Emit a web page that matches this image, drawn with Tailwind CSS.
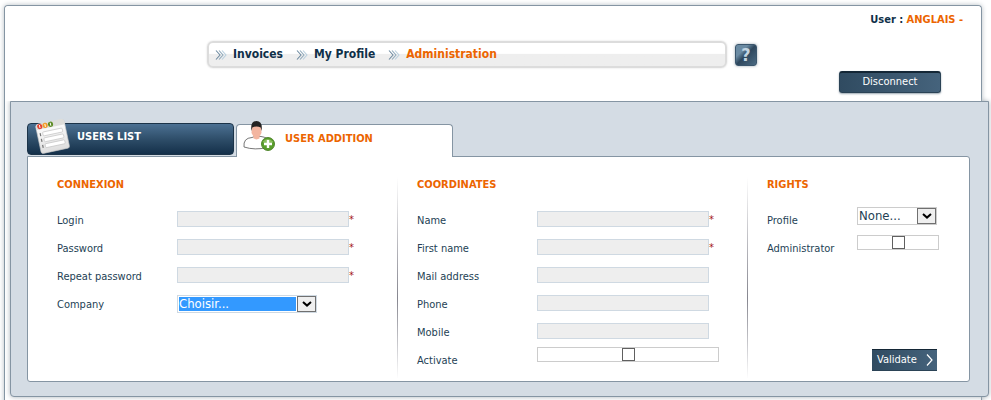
<!DOCTYPE html>
<html lang="en">
<head>
  <meta charset="UTF-8">
  <meta name="viewport" content="width=device-width, initial-scale=1.0">
  <title>Administration - User addition</title>
  <script src="https://cdn.jsdelivr.net/npm/@tailwindcss/browser@4"></script>
</head>
<body class="bg-white font-['DejaVu_Sans_Condensed','DejaVu_Sans',sans-serif] text-[11px] leading-4 text-[#0f3049]">
  <svg class="hidden">
    <symbol id="chevrons" viewBox="0 0 12 10">
      <path d="M1 0.5l4 4.5-4 4.5" fill="none" stroke="#6f8ba1" stroke-width="1.1"/>
      <path d="M4 0.5l4 4.5-4 4.5" fill="none" stroke="#8ea8ba" stroke-width="1.1"/>
      <path d="M7 0.5l4 4.5-4 4.5" fill="none" stroke="#b9cfde" stroke-width="1.1"/>
    </symbol>
    <symbol id="arrow-down" viewBox="0 0 10 6">
      <path d="M1 1l4 3.6L9 1" fill="none" stroke="#000" stroke-width="2"/>
    </symbol>
  </svg>

  <div class="flow-root">
    <div class="mt-[5px] mr-[9px] ml-1 min-h-[calc(100vh-5px)] rounded-t border border-b-0 border-[#8595a3] bg-white pb-2 shadow-[0_0_5px_#b4bcc2]">

      <!-- Header -->
      <header class="relative z-10 rounded-t bg-white pt-[6px] pb-2">
        <p class="pr-[18px] text-right font-bold">User : <span class="text-[#ec6500]">ANGLAIS -</span></p>

        <div class="mt-[13px] flex items-center gap-2 pl-[202px]">
          <nav class="flex h-[27px] w-[520px] items-center gap-[13px] rounded-md border-2 border-[#dcdcdc] bg-linear-to-b from-white from-45% to-[#eeeeee] to-50% px-[6px] pb-[2px] text-[12px] font-bold shadow-[0_0_2px_#d8d8d8]">
            <a href="#" class="flex items-center gap-[6px]"><svg class="mt-[2px] h-[10px] w-3"><use href="#chevrons"/></svg>Invoices</a>
            <a href="#" class="flex items-center gap-[6px]"><svg class="mt-[2px] h-[10px] w-3"><use href="#chevrons"/></svg>My Profile</a>
            <a href="#" class="flex items-center gap-[6px] text-[#ec6500]"><svg class="mt-[2px] h-[10px] w-3"><use href="#chevrons"/></svg>Administration</a>
          </nav>
          <button type="button" class="h-[22px] w-[22px] rounded-[3px] border border-[#3b566d] bg-linear-to-br from-[#6b8ba3] from-30% via-[#2d475d] via-50% to-[#4c6b84] text-[18px] leading-5 font-bold text-[#c3d5e2] shadow-[0_0_3px_#9aa7b1]">?</button>
        </div>

        <div class="mt-[3px] flex justify-end pr-10">
          <button type="button" class="h-[22px] w-[102px] rounded-[3px] border border-t-2 border-[#2b4356] border-t-[#142736] bg-linear-to-r from-[#304b61] to-[#45637c] pb-[2px] text-white shadow-[0_1px_2px_#9aa7b1]">Disconnect</button>
        </div>
      </header>

      <!-- Panel -->
      <main class="relative -mr-2 ml-[5px] rounded-b border border-[#8595a3] bg-[#d4dce4] pt-[21px] pr-[18px] pb-[14px] pl-4 shadow-[0_0_5px_#aab3ba]">
        <div class="flex items-start gap-[2px]">
          <a href="#" class="relative flex h-[32px] w-[207px] items-center rounded border border-[#1c3449] bg-linear-to-b from-[#4c7193] via-[#2c4b66] via-55% to-[#14304a] pb-1 pl-[49px] font-bold text-white">
            <svg class="absolute -top-[6px] left-[5px] h-9 w-10" viewBox="0 0 40 36">
              <defs>
                <linearGradient id="sheet" x1="0" y1="0" x2="0" y2="1">
                  <stop offset="0" stop-color="#fff"/><stop offset="1" stop-color="#dedede"/>
                </linearGradient>
              </defs>
              <g transform="rotate(-12 20 18)">
                <rect x="5" y="4" width="29" height="29" rx="2" fill="url(#sheet)" stroke="#c4c4c4" stroke-width=".6"/>
                <path d="M5 9V6q0-3 3-3h23q3 0 3 3v3z" fill="#dededb"/>
                <circle cx="9" cy="6" r="2.600" fill="#e5402d"/>
                <circle cx="14.500" cy="6" r="2.600" fill="#f19a27"/>
                <circle cx="20" cy="6" r="2.600" fill="#5d8c24"/>
                <path d="M9 4.500v3M14.500 4.500v3M20 4.500v3" stroke="#fff" stroke-width=".9"/>
                <g fill="#fff" stroke="#c4c4c4" stroke-width=".7">
                  <rect x="10.500" y="12" width="20" height="4" rx="1"/>
                  <rect x="10.500" y="18" width="20" height="4" rx="1"/>
                  <rect x="10.500" y="24" width="20" height="4" rx="1"/>
                </g>
                <path d="M8 12.500v3M8 18.500v3M8 24.500v3" stroke="#777" stroke-width="1.200"/>
              </g>
            </svg>
            USERS LIST
          </a>
          <a href="#" class="relative z-10 mt-px -mb-px flex h-[33px] w-[217px] items-center rounded-t border border-b-0 border-[#8595a3] bg-white pb-1 pl-12 font-bold text-[#ec6500]">
            <svg class="absolute -top-[5px] left-[6px] h-8 w-8" viewBox="0 0 32 32">
              <path d="M1 27q-1-9 8-9.500l4-1.500 5 .5q7 1 8 5l-2 6q-12 3-23-.5z" fill="#fff" stroke="#555" stroke-width=".8"/>
              <path d="M9 5h9l.5 8-2 3.500v2l-3 1-3-1v-2L8.500 13z" fill="#f3b5a0"/>
              <path d="M8.500 11Q7 1 13.500 1T18.500 11l-.8-3.500q-4-2-8.400 0z" fill="#222"/>
              <circle cx="25" cy="24" r="6.500" fill="#5a9e2d" stroke="#387312" stroke-width=".8"/>
              <path d="M19.500 22q5-6 11 0-5 3-11 0z" fill="#9ccb71" opacity=".7"/>
              <path d="M25 20v8M21 24h8" stroke="#fff" stroke-width="2.400"/>
            </svg>
            USER ADDITION
          </a>
        </div>

        <form class="grid grid-cols-[369px_350px_1fr] rounded-[3px] rounded-tl-none border border-[#8595a3] bg-white pt-3 pb-[2px] text-[#243f55]">
          <!-- Connexion -->
          <section class="pt-2 pl-[29px]">
            <h2 class="mb-[18px] font-bold text-[#ec6500]">CONNEXION</h2>
            <div class="flex h-7 items-start leading-[18px]">
              <label for="login" class="w-[120px] pt-px">Login</label>
              <input id="login" type="text" class="h-4 w-[172px] border border-[#cfd9e2] bg-[#eeeeee]"><span class="text-[#a31515]">*</span>
            </div>
            <div class="flex h-7 items-start leading-[18px]">
              <label for="password" class="w-[120px] pt-px">Password</label>
              <input id="password" type="password" class="h-4 w-[172px] border border-[#cfd9e2] bg-[#eeeeee]"><span class="text-[#a31515]">*</span>
            </div>
            <div class="flex h-7 items-start leading-[18px]">
              <label for="repeat" class="w-[120px] pt-px">Repeat password</label>
              <input id="repeat" type="password" class="h-4 w-[172px] border border-[#cfd9e2] bg-[#eeeeee]"><span class="text-[#a31515]">*</span>
            </div>
            <div class="flex h-7 items-start leading-[18px]">
              <label for="company" class="w-[120px] pt-px">Company</label>
              <div class="relative h-[18px] w-[140px] border border-[#cfd9e2] p-px">
                <select id="company" class="block h-[14px] w-[117px] appearance-none bg-[#3399ff] text-[13px] leading-[14px] text-white">
                  <option>Choisir...</option>
                </select>
                <span class="pointer-events-none absolute top-0 right-0 flex h-4 w-[19px] items-center justify-center border border-[#707070] bg-[#efefef]"><svg class="h-[6px] w-[10px]"><use href="#arrow-down"/></svg></span>
              </div>
            </div>
          </section>

          <!-- Coordinates -->
          <section class="relative pt-2 pl-5">
            <div class="absolute top-2 bottom-0 left-0 w-px bg-linear-to-b from-white via-[#86868f] via-60% to-white"></div>
            <h2 class="mb-[18px] font-bold text-[#ec6500]">COORDINATES</h2>
            <div class="flex h-7 items-start leading-[18px]">
              <label for="name" class="w-[120px] pt-px">Name</label>
              <input id="name" type="text" class="h-4 w-[172px] border border-[#cfd9e2] bg-[#eeeeee]"><span class="text-[#a31515]">*</span>
            </div>
            <div class="flex h-7 items-start leading-[18px]">
              <label for="firstname" class="w-[120px] pt-px">First name</label>
              <input id="firstname" type="text" class="h-4 w-[172px] border border-[#cfd9e2] bg-[#eeeeee]"><span class="text-[#a31515]">*</span>
            </div>
            <div class="flex h-7 items-start leading-[18px]">
              <label for="mail" class="w-[120px] pt-px">Mail address</label>
              <input id="mail" type="email" class="h-4 w-[172px] border border-[#cfd9e2] bg-[#eeeeee]">
            </div>
            <div class="flex h-7 items-start leading-[18px]">
              <label for="phone" class="w-[120px] pt-px">Phone</label>
              <input id="phone" type="tel" class="h-4 w-[172px] border border-[#cfd9e2] bg-[#eeeeee]">
            </div>
            <div class="flex h-7 items-start leading-[18px]">
              <label for="mobile" class="w-[120px] pt-px">Mobile</label>
              <input id="mobile" type="tel" class="h-4 w-[172px] border border-[#cfd9e2] bg-[#eeeeee]">
            </div>
            <div class="flex h-7 items-start leading-[18px]">
              <label for="activate" class="w-[120px] pt-px">Activate</label>
              <div class="-mt-1 flex h-[15px] w-[182px] items-center justify-center border border-[#cccccc]">
                <input id="activate" type="checkbox" class="h-[13px] w-[13px] appearance-none border border-[#606060] bg-white checked:bg-[#45637c]">
              </div>
            </div>
          </section>

          <!-- Rights -->
          <section class="relative flex flex-col pt-2 pl-5">
            <div class="absolute top-2 bottom-0 left-0 w-px bg-linear-to-b from-white via-[#86868f] via-60% to-white"></div>
            <h2 class="mb-[18px] font-bold text-[#ec6500]">RIGHTS</h2>
            <div class="flex h-7 items-start leading-[18px] whitespace-nowrap">
              <label for="profile" class="w-[90px] pt-px">Profile</label>
              <div class="relative -mt-1 h-[18px] w-20 border border-[#cccccc] p-px">
                <select id="profile" class="block h-[14px] w-[58px] appearance-none text-[13px] leading-[14px]">
                  <option>None...</option>
                </select>
                <span class="pointer-events-none absolute top-0 right-0 flex h-4 w-[19px] items-center justify-center border border-[#707070] bg-[#efefef]"><svg class="h-[6px] w-[10px]"><use href="#arrow-down"/></svg></span>
              </div>
            </div>
            <div class="flex h-7 items-start leading-[18px] whitespace-nowrap">
              <label for="admin" class="w-[90px] pt-px">Administrator</label>
              <div class="-mt-1 flex h-[15px] w-[82px] items-center justify-center border border-[#cccccc]">
                <input id="admin" type="checkbox" class="h-[13px] w-[13px] appearance-none border border-[#606060] bg-white checked:bg-[#45637c]">
              </div>
            </div>
            <button type="submit" class="mt-auto mr-8 mb-2 flex h-[22px] w-[65px] items-center justify-between self-end border-y border-t-[#142736] border-b-[#2b4356] bg-linear-to-r from-[#304b61] to-[#45637c] pr-1 pl-[5px] text-white">
              Validate
              <svg class="h-3 w-[7px]" viewBox="0 0 7 12"><path d="M1 .5L6 6l-5 5.500" fill="none" stroke="#fff" stroke-width="1.200"/></svg>
            </button>
          </section>
        </form>
      </main>
    </div>
  </div>
</body>
</html>
